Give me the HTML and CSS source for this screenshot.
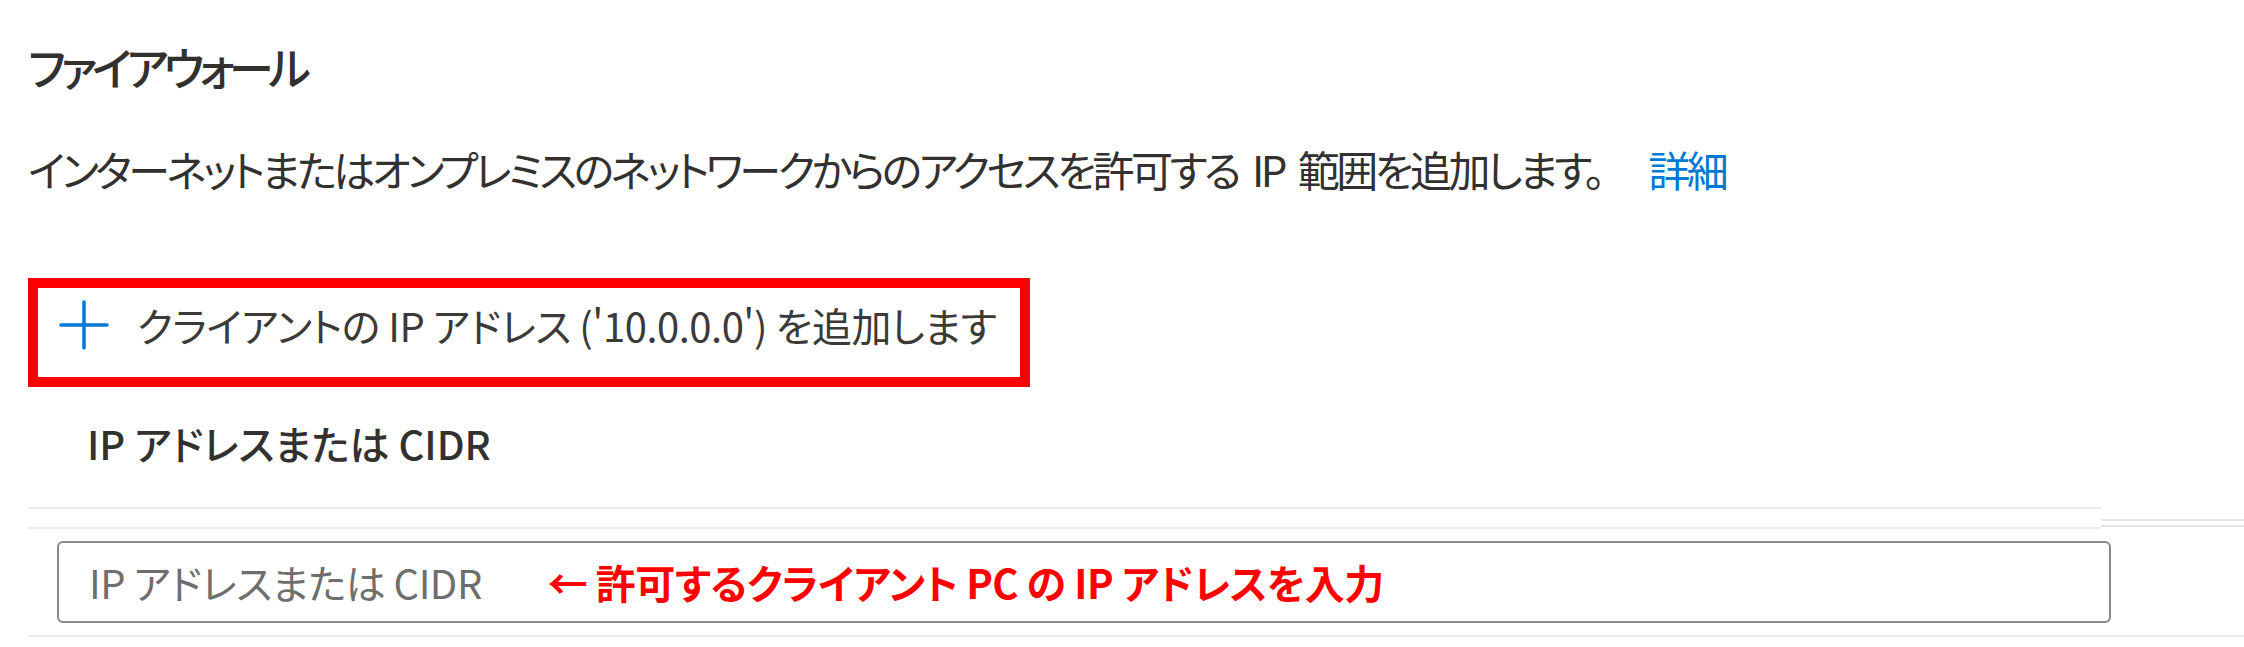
FILE: index.html
```html
<!DOCTYPE html>
<html lang="ja">
<head>
<meta charset="utf-8">
<title>ファイアウォール</title>
<link rel="stylesheet" href="styles.css">
</head>
<body>
<main class="page">
  <h1 class="title">ファイアウォール</h1>
  <p class="desc">インターネットまたはオンプレミスのネットワークからのアクセスを許可する IP 範囲を追加します。<a class="link" href="#">詳細</a></p>

  <div class="highlight">
    <button class="add-btn" type="button">
      <svg class="plus" viewBox="0 0 50 50" width="50" height="50" aria-hidden="true">
        <path d="M25 2 V48 M2 25 H48" stroke="#0078d4" stroke-width="3.5" stroke-linecap="round" fill="none"/>
      </svg>
      <span class="add-label">クライアントの IP アドレス ('10.0.0.0') を追加します</span>
    </button>
  </div>

  <div class="table">
    <div class="thead">
      <div class="thead-main">
        <div class="th">IP アドレスまたは CIDR</div>
        <div class="th-gap"></div>
      </div>
      <div class="thead-side"></div>
    </div>
    <div class="row">
      <div class="field">
        <span class="placeholder">IP アドレスまたは CIDR</span>
        <span class="note">← 許可するクライアント PC の IP アドレスを入力</span>
      </div>
    </div>
  </div>
</main>
</body>
</html>
```

FILE: styles.css
```css
html, body {
  margin: 0;
  padding: 0;
  background: #ffffff;
  overflow: hidden;
}

body {
  font-family: "Noto Sans CJK JP", "Noto Sans", sans-serif;
  font-feature-settings: "palt";
  color: #323130;
  width: 2244px;
  height: 647px;
}

.page {
  padding: 45px 0 0 28px;
}

.title {
  margin: 0;
  font-size: 45px;
  line-height: 44px;
  font-weight: 500;
  letter-spacing: -5px;
  color: #323130;
}

.desc {
  margin: 59px 0 0 0;
  font-size: 42px;
  line-height: 42px;
  font-weight: 400;
  letter-spacing: -3.5px;
  word-spacing: 8px;
  color: #323130;
}

.link {
  color: #0078d4;
  text-decoration: none;
  margin-left: 46px;
}

.highlight {
  display: inline-block;
  margin-top: 88px;
  border: 10px solid #ff0000;
}

.add-btn {
  display: flex;
  align-items: center;
  gap: 28px;
  background: #ffffff;
  border: 0;
  margin: 0;
  padding: 12px 24px 27px 21px;
  font-family: inherit;
  font-feature-settings: "palt";
  cursor: pointer;
}

.plus {
  display: block;
  flex: none;
}

.add-label {
  font-size: 40px;
  line-height: 40px;
  letter-spacing: -0.5px;
  color: #3b3a39;
}

.table {
  margin-top: 36px;
}

.thead {
  display: flex;
  align-items: flex-start;
}

.thead-main {
  width: 2073px;
  flex: none;
}

.th {
  padding: 0 0 44px 59px;
  font-size: 40px;
  line-height: 40px;
  font-weight: 500;
  letter-spacing: 0;
  color: #323130;
  border-bottom: 2px solid #edebe9;
}

.th-gap {
  height: 18px;
  border-bottom: 2px solid #edebe9;
}

.thead-side {
  flex: 1;
  margin-top: 96px;
  height: 4px;
  border-top: 2px solid #e6e4e2;
  border-bottom: 2px solid #e6e4e2;
}

.row {
  padding: 12px 133px 12px 29px;
  border-bottom: 2px solid #edebe9;
}

.field {
  display: flex;
  align-items: center;
  height: 78px;
  border: 2px solid #8a8886;
  border-radius: 6px;
  padding: 0 30px;
}

.placeholder {
  font-size: 40px;
  line-height: 40px;
  letter-spacing: -0.5px;
  color: #6e6e6e;
}

.note {
  margin-left: 66px;
  font-size: 40px;
  line-height: 40px;
  font-weight: 700;
  letter-spacing: -0.5px;
  color: #ff0000;
}
```
